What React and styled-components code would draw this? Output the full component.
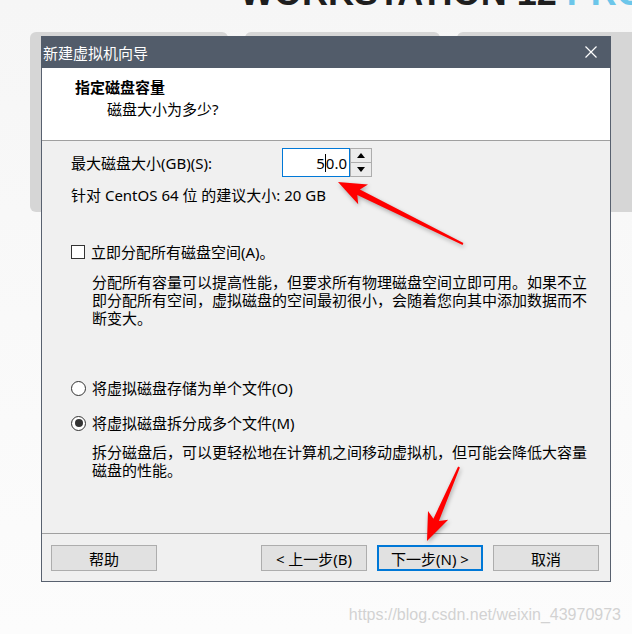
import React from 'react'
import styled, { createGlobalStyle } from 'styled-components'

const GlobalStyle = createGlobalStyle`
  html, body {
    margin: 0;
    padding: 0;
  }
  body {
    width: 632px;
    height: 634px;
    overflow: hidden;
    font-family: "Noto Sans", "Noto Sans CJK SC", sans-serif;
  }
`

function arrowPoints(tx, ty, hx, hy) {
  const dx = hx - tx
  const dy = hy - ty
  const len = Math.hypot(dx, dy)
  const ux = dx / len
  const uy = dy / len
  const nx = -uy
  const ny = ux
  const headLen = 23
  const headW = 11
  const neck = 3
  const tail = 1
  const sweep = 5
  const bx = hx - ux * headLen
  const by = hy - uy * headLen
  return [
    [tx + nx * tail, ty + ny * tail],
    [bx + nx * neck, by + ny * neck],
    [bx - ux * sweep + nx * headW, by - uy * sweep + ny * headW],
    [hx, hy],
    [bx - ux * sweep - nx * headW, by - uy * sweep - ny * headW],
    [bx - nx * neck, by - ny * neck],
    [tx - nx * tail, ty - ny * tail],
  ]
    .map(p => p.map(v => v.toFixed(1)).join(','))
    .join(' ')
}

const arrows = [
  [463, 244, 338, 182],
  [459, 467, 427, 541],
]

function App() {
  return (
    <Page>
      <GlobalStyle />
      <Banner>
        <BannerText>
          WORKSTATION 12 <Pro>PRO</Pro>
        </BannerText>
      </Banner>
      <Tiles>
        <Tile />
        <Tile $w={195} />
        <Tile $last />
      </Tiles>

      <Dialog>
        <TitleBar>
          <span>新建虚拟机向导</span>
          <svg width="12" height="12" viewBox="0 0 12 12">
            <path d="M0.5 0.5 L11.5 11.5 M11.5 0.5 L0.5 11.5" stroke="#fff" strokeWidth="1.2" fill="none" />
          </svg>
        </TitleBar>
        <Header>
          <HeaderTitle>指定磁盘容量</HeaderTitle>
          <HeaderSub>磁盘大小为多少?</HeaderSub>
        </Header>
        <Body>
          <SizeRow>
            <SizeLabel>最大磁盘大小(GB)(S):</SizeLabel>
            <NumberBox>
              5<Caret />0.0
            </NumberBox>
            <Spinner>
              <SpinButton>
                <Tri $up />
              </SpinButton>
              <SpinButton>
                <Tri />
              </SpinButton>
            </Spinner>
          </SizeRow>
          <Hint>针对 CentOS 64 位 的建议大小: 20 GB</Hint>

          <OptionRow $mt={37}>
            <CheckBox />
            <span>立即分配所有磁盘空间(A)。</span>
          </OptionRow>
          <Desc $mt={11}>
            <Line>分配所有容量可以提高性能，但要求所有物理磁盘空间立即可用。如果不立</Line>
            <Line>即分配所有空间，虚拟磁盘的空间最初很小，会随着您向其中添加数据而不</Line>
            <Line>断变大。</Line>
          </Desc>

          <OptionRow $mt={51}>
            <Radio />
            <span>将虚拟磁盘存储为单个文件(O)</span>
          </OptionRow>
          <OptionRow $mt={15}>
            <Radio $checked />
            <span>将虚拟磁盘拆分成多个文件(M)</span>
          </OptionRow>
          <Desc $mt={10}>
            <Line>拆分磁盘后，可以更轻松地在计算机之间移动虚拟机，但可能会降低大容量</Line>
            <Line>磁盘的性能。</Line>
          </Desc>
        </Body>
        <Footer>
          <Button $push>帮助</Button>
          <Button>&lt; 上一步(B)</Button>
          <Button $primary>下一步(N) &gt;</Button>
          <Button>取消</Button>
        </Footer>
      </Dialog>

      <Watermark>https://blog.csdn.net/weixin_43970973</Watermark>

      <Overlay width="632" height="634" viewBox="0 0 632 634">
        {arrows.map((a, i) => (
          <polygon key={i} points={arrowPoints(...a)} fill="#ff0000" />
        ))}
      </Overlay>
    </Page>
  )
}

export default App

const Page = styled.div`
  position: relative;
  width: 632px;
  height: 634px;
  overflow: hidden;
  background: linear-gradient(#f6f6f6, #fcfcfc);
`

const Banner = styled.div`
  height: 32px;
  overflow: hidden;
  padding-left: 240px;
  box-sizing: border-box;
  white-space: nowrap;
`

const BannerText = styled.div`
  font-family: "Liberation Sans", Arial, sans-serif;
  font-weight: 700;
  font-size: 36px;
  line-height: 36px;
  margin-top: -25.5px;
  color: #1e1e1e;
`

const Pro = styled.span`
  color: #6cc6ea;
`

const Tiles = styled.div`
  display: flex;
  gap: 17px;
  padding-left: 30px;
  margin-right: -30px;
`

const Tile = styled.div`
  flex: ${p => (p.$last ? '1' : `0 0 ${p.$w || 198}px`)};
  height: 180px;
  background: #d6d6d6;
  border-radius: 6px;
`

const Dialog = styled.div`
  position: absolute;
  left: 41px;
  top: 36px;
  width: 570px;
  height: 546px;
  box-sizing: border-box;
  border: 1px solid #58616f;
  border-top: none;
  background: #f0f0f0;
  display: flex;
  flex-direction: column;
`

const TitleBar = styled.div`
  height: 32px;
  flex: none;
  display: flex;
  align-items: center;
  justify-content: space-between;
  background: #525c6a;
  color: #fff;
  font-size: 15px;
  padding: 0 14px 0 2px;
  margin: 0 -1px;
  svg {
    display: block;
  }
`

const Header = styled.div`
  height: 73px;
  flex: none;
  box-sizing: border-box;
  background: #fff;
  border-bottom: 1px solid #a0a0a0;
  padding: 9px 0 0 33px;
  font-size: 15px;
  color: #000;
`

const HeaderTitle = styled.div`
  font-weight: 700;
  line-height: 20px;
`

const HeaderSub = styled.div`
  margin-top: 2px;
  padding-left: 32px;
  line-height: 20px;
`

const Body = styled.div`
  flex: 1;
  padding: 7px 0 0 29px;
  font-size: 15px;
  color: #000;
`

const SizeRow = styled.div`
  display: flex;
  align-items: center;
  height: 29px;
`

const SizeLabel = styled.div`
  width: 211px;
  line-height: 20px;
`

const NumberBox = styled.div`
  width: 68px;
  height: 29px;
  box-sizing: border-box;
  border: 1px solid #0078d7;
  background: #fff;
  display: flex;
  align-items: center;
  justify-content: flex-end;
  padding-right: 2px;
  line-height: 20px;
`

const Caret = styled.span`
  display: inline-block;
  width: 1px;
  height: 18px;
  background: #000;
`

const Spinner = styled.div`
  width: 22px;
  height: 29px;
  display: flex;
  flex-direction: column;
  box-sizing: border-box;
`

const SpinButton = styled.div`
  flex: 1;
  border: 1px solid #adadad;
  background: #ececec;
  display: flex;
  align-items: center;
  justify-content: center;
  & + & {
    border-top: none;
  }
`

const Tri = styled.span`
  width: 0;
  height: 0;
  border-left: 4px solid transparent;
  border-right: 4px solid transparent;
  ${p => (p.$up ? 'border-bottom: 5px solid #000;' : 'border-top: 5px solid #000;')}
`

const Hint = styled.div`
  margin-top: 8px;
  line-height: 20px;
`

const OptionRow = styled.div`
  margin-top: ${p => p.$mt}px;
  display: flex;
  align-items: center;
  gap: 6px;
  height: 20px;
  line-height: 20px;
`

const CheckBox = styled.span`
  width: 14px;
  height: 14px;
  box-sizing: border-box;
  border: 1px solid #333;
  background: #fff;
`

const Radio = styled.span`
  width: 15px;
  height: 15px;
  box-sizing: border-box;
  border-radius: 50%;
  border: 1px solid #333;
  background: #fff;
  display: flex;
  align-items: center;
  justify-content: center;
  &::after {
    content: '';
    width: 8px;
    height: 8px;
    border-radius: 50%;
    background: ${p => (p.$checked ? '#333' : 'transparent')};
  }
`

const Desc = styled.div`
  margin-top: ${p => p.$mt}px;
  padding-left: 21px;
`

const Line = styled.div`
  height: 18px;
  line-height: 18px;
  white-space: nowrap;
`

const Footer = styled.div`
  height: 48px;
  flex: none;
  box-sizing: border-box;
  border-top: 1px solid #a0a0a0;
  padding: 11px 11px 0 9px;
  display: flex;
  gap: 10px;
`

const Button = styled.div`
  width: 106px;
  height: 26px;
  box-sizing: border-box;
  border: ${p => (p.$primary ? '2px solid #0078d7' : '1px solid #adadad')};
  background: #e1e1e1;
  display: flex;
  align-items: center;
  justify-content: center;
  font-size: 15px;
  color: #000;
  margin-right: ${p => (p.$push ? 'auto' : '0')};
`

const Watermark = styled.div`
  position: absolute;
  right: 11px;
  top: 605px;
  font-family: "Liberation Sans", Arial, sans-serif;
  font-size: 16px;
  line-height: 20px;
  color: #d2d2d2;
  text-shadow: 0 0 1px #fff;
`

const Overlay = styled.svg`
  position: absolute;
  left: 0;
  top: 0;
  pointer-events: none;
  filter: drop-shadow(1px 2px 2px rgba(0, 0, 0, 0.3));
`
